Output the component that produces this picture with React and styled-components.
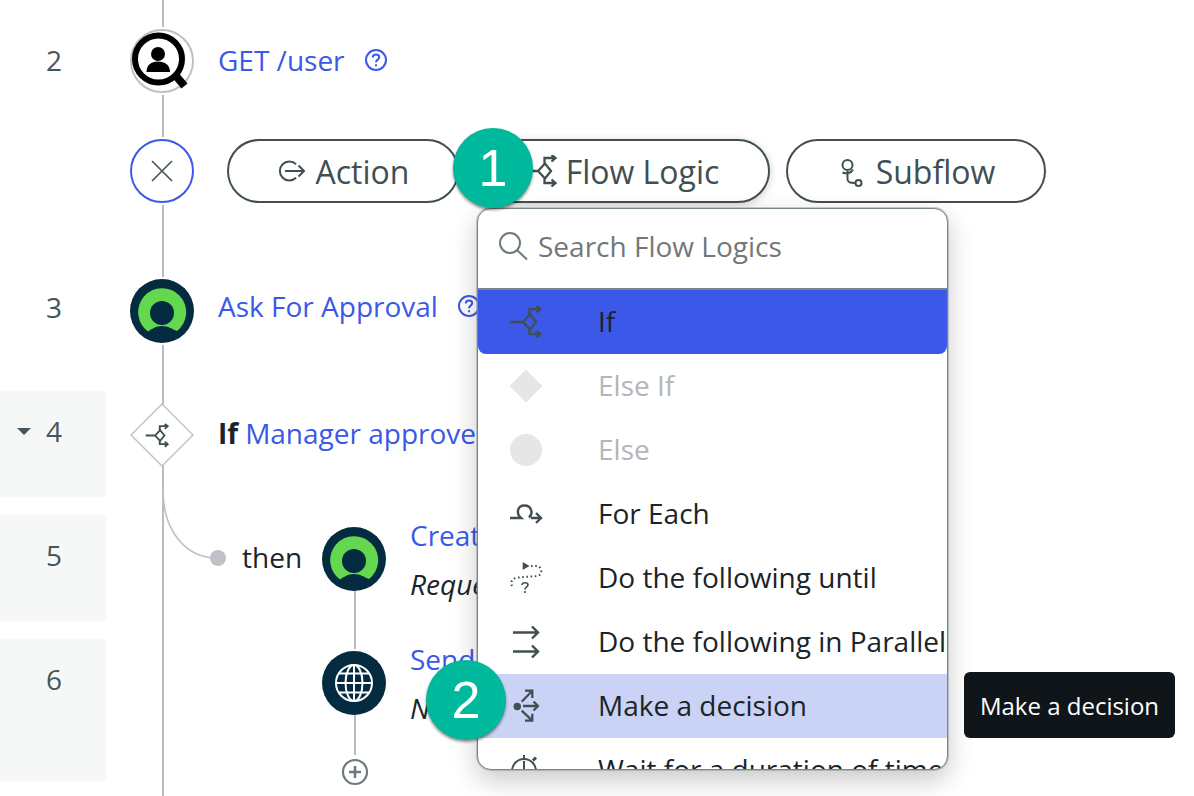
import React from "react";
import styled, { createGlobalStyle } from "styled-components";

const Global = createGlobalStyle`
  html, body { margin: 0; padding: 0; background: #fff; }
  body { font-family: "Open Sans", "Liberation Sans", sans-serif; }
`;

const Page = styled.div`
  width: 1194px;
  height: 796px;
  overflow: hidden;
  padding-top: 20px;
  box-sizing: border-box;
  background: linear-gradient(#b9bdc1, #b9bdc1) no-repeat 162px 0 / 2px 100%;
  color: #1b2426;
  font-size: 28px;
`;

const Row = styled.div`
  display: grid;
  grid-template-columns: 106px 1fr;
  height: ${(p) => p.$height}px;
`;

const NumCell = styled.div`
  height: ${(p) => p.$height || 106}px;
  background: ${(p) => (p.$shaded ? "#f6f8f8" : "transparent")};
  display: grid;
  grid-template-columns: 46px auto;
  grid-template-rows: 80px;
  align-items: center;
  justify-content: start;
  color: #47565a;
`;

const Caret = styled.span`
  justify-self: start;
  margin-left: 17px;
  width: 0;
  height: 0;
  border-left: 7px solid transparent;
  border-right: 7px solid transparent;
  border-top: 7px solid #47565a;
`;

const Num = styled.span`
  grid-column: 2;
`;

const Content = styled.div`
  position: relative;
  display: flex;
  align-items: ${(p) => (p.$top ? "flex-start" : "center")};
  align-self: start;
  padding: ${(p) => p.$pad || 0}px 0 0 24px;
  height: ${(p) => (p.$top ? "100%" : "64px")};
  box-sizing: content-box;
`;

const Node = styled.div`
  flex: none;
  width: 64px;
  height: 64px;
  box-sizing: border-box;
  border-radius: 50%;
  background: ${(p) => p.$bg || "#fff"};
  border: ${(p) => (p.$ring ? `2px solid ${p.$ring}` : "none")};
  display: flex;
  align-items: center;
  justify-content: center;
  box-shadow: 0 0 0 2px #fff;
`;

const DiamondNode = styled(Node)`
  border-radius: 0;
  background: none;
  box-shadow: none;
`;

const Title = styled.div`
  margin-left: 24px;
  display: flex;
  align-items: center;
  white-space: nowrap;
  color: #3c58e8;
  margin-top: ${(p) => p.$shift || 0}px;
`;

const Help = styled.svg`
  flex: none;
  margin-left: 19px;
  width: 24px;
  height: 24px;
`;

const Strong = styled.b`
  color: #1b2426;
  margin-right: 7px;
`;

const Pills = styled.div`
  display: flex;
  gap: 16px;
  margin-left: 33px;
`;

const PillWrap = styled.div`
  position: relative;
`;

const Pill = styled.div`
  width: ${(p) => p.$w}px;
  height: 64px;
  box-sizing: border-box;
  border: 2px solid #414f52;
  border-radius: 32px;
  background: #fff;
  display: flex;
  align-items: center;
  justify-content: center;
  gap: ${(p) => p.$gap || 10}px;
  font-size: 32px;
  color: #414f52;
  padding: 0 ${(p) => p.$pr || 0}px 0 ${(p) => p.$pl || 0}px;
  box-shadow: ${(p) => (p.$raised ? "0 2px 8px rgba(0,0,0,.2)" : "none")};
`;

const Badge = styled.div`
  position: absolute;
  left: ${(p) => p.$x}px;
  top: ${(p) => p.$y}px;
  z-index: 3;
  width: 80px;
  height: 80px;
  border-radius: 50%;
  background: #00b89c;
  color: #fff;
  font-family: "Liberation Sans", Arial, sans-serif;
  font-size: 52px;
  display: flex;
  align-items: center;
  justify-content: center;
  box-shadow: 0 2px 3px rgba(0, 0, 0, 0.45);
`;

const Menu = styled.div`
  position: absolute;
  left: 2px;
  top: 69px;
  z-index: 2;
  width: 471px;
  height: 562px;
  box-sizing: border-box;
  border: 1px solid #78868a;
  border-radius: 14px;
  background: #fff;
  box-shadow: 0 0 0 1px rgba(120, 134, 138, 0.4), 0 10px 26px rgba(0, 0, 0, 0.22);
`;

const MenuClip = styled.div`
  height: 100%;
  overflow: hidden;
  border-radius: 13px;
`;

const Search = styled.div`
  height: 79px;
  box-sizing: content-box;
  border-bottom: 2px solid #78868a;
  display: flex;
  align-items: center;
  padding-left: 20px;
  color: #72787a;
`;

const SearchInner = styled.div`
  display: flex;
  align-items: center;
  gap: 10px;
  margin-top: -6px;
`;

const Item = styled.div`
  height: 64px;
  display: flex;
  align-items: center;
  white-space: nowrap;
  overflow: hidden;
  background: ${(p) =>
    p.$state === "active" ? "#3b58e8" : p.$state === "hover" ? "#cad2f6" : "transparent"};
  border-radius: ${(p) => (p.$state === "active" ? "0 0 8px 8px" : "0")};
  color: ${(p) => (p.$state === "off" ? "#b3b6b8" : "#1b2426")};
`;

const ItemLabel = styled.span`
  margin-top: -2px;
`;

const ItemIcon = styled.div`
  flex: none;
  width: 120px;
  padding-left: 31px;
  box-sizing: border-box;
  display: flex;
  align-items: center;
`;

const Tooltip = styled.div`
  position: absolute;
  left: 486px;
  top: 463px;
  width: 211px;
  height: 66px;
  border-radius: 6px;
  background: #10151a;
  color: #fff;
  font-size: 24px;
  display: flex;
  align-items: center;
  justify-content: center;
`;

const Connector = styled.svg`
  position: absolute;
  left: 49px;
  top: -25px;
  width: 90px;
  height: 90px;
`;

const Then = styled.span`
  margin: -2px 0 0 112px;
  width: 80px;
  height: 64px;
  flex: none;
  display: flex;
  align-items: center;
`;

const StemCol = styled.div`
  flex: none;
  width: 64px;
  height: 100%;
  display: flex;
  flex-direction: column;
  align-items: center;
`;

const Stem = styled.div`
  width: 2px;
  flex: ${(p) => (p.$h ? `0 0 ${p.$h}px` : "1")};
  margin: ${(p) => p.$m || "0"};
  background: #b9bdc1;
  position: relative;
  left: 1px;
`;

const PlusSvg = styled.svg`
  flex: none;
  margin: 3px 0 0 2px;
`;

const StepText = styled.div`
  margin: ${(p) => p.$shift || 0}px 0 0 24px;
  display: flex;
  flex-direction: column;
  gap: 7px;
  white-space: nowrap;
`;

const StepLine = styled.div`
  line-height: 42px;
  color: ${(p) => (p.$link ? "#3c58e8" : "#1b2426")};
  font-style: ${(p) => (p.$link ? "normal" : "italic")};
`;

const S = { fill: "none", stroke: "#414f52", strokeWidth: 2.3 };

const IfIcon = ({ w = 33, h = 32 }) => (
  <svg width={w} height={h} viewBox="0 0 33 32" {...S}>
    <path d="M1 16H14M14 16L21 8.5L27 16L21 23.5Z" />
    <path d="M20.5 8.5V3H31M27.5 0L31.5 3L27.5 6.5M20.5 23.5V28H31M27.5 24.5L31.5 28L27.5 31.5" />
  </svg>
);

const ActionIcon = () => (
  <svg width="28" height="22" viewBox="0 0 28 22" {...S} strokeWidth="2">
    <path d="M19 4.2A9.5 9.5 0 1 0 19 17.8" />
    <path d="M8 11H27M21.5 5.5L27 11L21.5 16.5" />
  </svg>
);

const SubflowIcon = () => (
  <svg width="24" height="34" viewBox="0 0 24 34" {...S} strokeWidth="2">
    <circle cx="8.5" cy="11" r="5" />
    <path d="M3.5 18.5C7 20 12 19.5 14 15.5" />
    <path d="M8.5 17V25C8.5 28 10.5 29.2 16.5 29" />
    <circle cx="19.5" cy="29" r="3" />
  </svg>
);

const SearchIcon = () => (
  <svg width="30" height="30" viewBox="0 0 30 30" fill="none" stroke="#6c7a7e" strokeWidth="2">
    <circle cx="12" cy="12" r="10" />
    <path d="M19.5 19.5L29 28.5" />
  </svg>
);

const HelpIcon = () => (
  <Help viewBox="0 0 24 24" fill="none" stroke="#3c58e8" strokeWidth="2">
    <circle cx="12" cy="12" r="10" />
    <path d="M8.8 9.5C8.8 7.6 10.2 6.6 12 6.6C13.9 6.6 15.2 7.7 15.2 9.3C15.2 11.6 12 11.6 12 14.2" />
    <path d="M12 16.3V18.2" />
  </Help>
);

const CloseIcon = () => (
  <svg width="22" height="22" viewBox="0 0 22 22" fill="none" stroke="#47565a" strokeWidth="1.7">
    <path d="M1 1L21 21M21 1L1 21" />
  </svg>
);

const LookupIcon = () => (
  <svg width="60" height="60" viewBox="2 2 60 60" style={{ overflow: "visible" }}>
    <circle cx="28.5" cy="30" r="23.5" fill="#fff" stroke="#000" strokeWidth="6" />
    <path d="M46 47L54.5 57" stroke="#000" strokeWidth="8" />
    <circle cx="28" cy="25" r="7" fill="#000" />
    <path d="M16.5 43C16.5 36 21 32.5 28 32.5C35 32.5 40 36 40 43Z" fill="#000" />
  </svg>
);

const ApprovalIcon = () => (
  <svg width="64" height="64" viewBox="0 0 64 64">
    <path
      d="M18 52.5A24 24 0 1 1 47 52C42 50 38 47 32 47C26 47 22 50 18 52.5Z"
      fill="#63d84f"
    />
    <circle cx="32" cy="34" r="12" fill="#042b40" />
  </svg>
);

const GlobeIcon = () => (
  <svg width="40" height="40" viewBox="0 0 40 40" fill="none" stroke="#fff" strokeWidth="2">
    <circle cx="20" cy="20" r="18" />
    <ellipse cx="20" cy="20" rx="8.5" ry="18" />
    <path d="M20 2V38M2 20H38M5 10.5H35M5 29.5H35" />
  </svg>
);

const DiamondIcon = () => (
  <svg width="64" height="64" viewBox="0 0 64 64">
    <path d="M32 1L63 32L32 63L1 32Z" fill="#fff" stroke="#bcc6c8" strokeWidth="1.5" />
    <g transform="translate(15 21) scale(.72)">
      <g fill="none" stroke="#414f52" strokeWidth="2.6">
        <path d="M1 16H14M14 16L21 8.5L27 16L21 23.5Z" />
        <path d="M20.5 8.5V3H31M27.5 0L31.5 3L27.5 6.5M20.5 23.5V28H31M27.5 24.5L31.5 28L27.5 31.5" />
      </g>
    </g>
  </svg>
);

const PlusIcon = () => (
  <PlusSvg width="28" height="28" viewBox="0 0 28 28" fill="none" stroke="#6a7a7e" strokeWidth="2.2">
    <circle cx="14" cy="14" r="12" />
    <path d="M14 8V20M8 14H20" strokeWidth="2.6" />
  </PlusSvg>
);

const ElseIfIcon = () => (
  <svg width="34" height="34" viewBox="0 0 34 34">
    <path d="M17 1L33 17L17 33L1 17Z" fill="#e4e6e8" stroke="#e4e6e8" strokeLinejoin="round" />
  </svg>
);

const ElseIcon = () => (
  <svg width="34" height="34" viewBox="0 0 34 34">
    <circle cx="17" cy="17" r="16" fill="#e4e6e8" />
  </svg>
);

const ForEachIcon = () => (
  <svg width="34" height="20" viewBox="0 0 34 20" {...S} strokeWidth="2.4">
    <path d="M1 14H12C7 10 8 1.5 15.5 1.5C22 1.5 25 9 20 13.5" />
    <path d="M22 14H32M27 9L32 14L27 19" />
  </svg>
);

const UntilIcon = () => (
  <svg width="34" height="34" viewBox="0 0 34 34" fill="none" stroke="#414f52" strokeWidth="2">
    <path d="M22 5H28C33 5.5 34 13 29 15L9 16.5C2 17 0 24 5 26.5" strokeDasharray="1.6 2.6" />
    <path d="M13.7 1L20.5 5L13.7 9Z" fill="#414f52" stroke="none" />
    <path d="M13 24C13 21 19 21 19 24C19 26 16 26 16 28.5M16 30V32" strokeWidth="1.6" />
  </svg>
);

const ParallelIcon = () => (
  <svg width="32" height="32" viewBox="0 0 32 32" {...S} strokeWidth="2.4">
    <path d="M4 6.5H29M23 0.5L29 6.5L23 12.5M4 25.5H29M23 19.5L29 25.5L23 31.5" />
  </svg>
);

const DecisionIcon = () => (
  <svg width="32" height="34" viewBox="0 0 32 34" {...S}>
    <circle cx="8.3" cy="17.5" r="3.7" fill="#414f52" stroke="none" />
    <path d="M12.7 12.7L23.3 1.7M16 1.7H23.3V9M12.7 21.7L23.3 31.7M23.3 24.7V31.7H16M14 17H29M24.5 12.5L29 17L24.5 21.5" />
  </svg>
);

const TimerIcon = () => (
  <svg width="32" height="34" viewBox="0 0 32 34" {...S} strokeWidth="2">
    <circle cx="15" cy="18" r="12" />
    <path d="M15 2V5M15 8V18" />
    <path d="M24 7.5L27 4.5" strokeWidth="3" />
  </svg>
);

const items = [
  { label: "If", icon: <IfIcon />, state: "active" },
  { label: "Else If", icon: <ElseIfIcon />, state: "off" },
  { label: "Else", icon: <ElseIcon />, state: "off" },
  { label: "For Each", icon: <ForEachIcon /> },
  { label: "Do the following until", icon: <UntilIcon /> },
  { label: "Do the following in Parallel", icon: <ParallelIcon /> },
  { label: "Make a decision", icon: <DecisionIcon />, state: "hover" },
  { label: "Wait for a duration of time", icon: <TimerIcon /> },
];

export default function App() {
  return (
    <Page>
      <Global />
      <Row $height={119}>
        <NumCell>
          <Num>2</Num>
        </NumCell>
        <Content $pad={9}>
          <Node $ring="#b8c2c4">
            <LookupIcon />
          </Node>
          <Title $shift={-2}>
            GET /user
            <HelpIcon />
          </Title>
        </Content>
      </Row>

      <Row $height={128}>
        <NumCell />
        <Content>
          <Node $ring="#3c58e8">
            <CloseIcon />
          </Node>
          <Pills>
            <Pill $w={232} $gap={11}>
              <ActionIcon />
              Action
            </Pill>
            <PillWrap>
              <Pill $w={295} $gap={9} $raised $pr={2}>
                <IfIcon />
                Flow Logic
              </Pill>
              <Badge $x={-22} $y={-11}>1</Badge>
              <Menu>
                <MenuClip>
                  <Search>
                    <SearchInner>
                      <SearchIcon />
                      Search Flow Logics
                    </SearchInner>
                  </Search>
                  {items.map((item) => (
                    <Item key={item.label} $state={item.state}>
                      <ItemIcon>{item.icon}</ItemIcon>
                      <ItemLabel>{item.label}</ItemLabel>
                    </Item>
                  ))}
                </MenuClip>
                <Badge $x={-52} $y={451}>2</Badge>
                <Tooltip>Make a decision</Tooltip>
              </Menu>
            </PillWrap>
            <Pill $w={260} $gap={13} $pl={2}>
              <SubflowIcon />
              Subflow
            </Pill>
          </Pills>
        </Content>
      </Row>

      <Row $height={124}>
        <NumCell>
          <Num>3</Num>
        </NumCell>
        <Content $pad={12}>
          <Node $bg="#042b40">
            <ApprovalIcon />
          </Node>
          <Title $shift={-10}>
            Ask For Approval
            <HelpIcon />
          </Title>
        </Content>
      </Row>

      <Row $height={124}>
        <NumCell $shaded>
          <Caret />
          <Num>4</Num>
        </NumCell>
        <Content $pad={12}>
          <DiamondNode>
            <DiamondIcon />
          </DiamondNode>
          <Title $shift={-4}>
            <Strong>If</Strong>
            Manager approved
          </Title>
        </Content>
      </Row>

      <Row $height={124}>
        <NumCell $shaded>
          <Num>5</Num>
        </NumCell>
        <Content $top $pad={12}>
          <Connector viewBox="0 0 90 90" fill="none">
            <path d="M8 0C8 40 30 68 62 68" stroke="#bcc0c4" strokeWidth="1.6" />
            <circle cx="63" cy="68" r="8" fill="#bfc1c6" />
          </Connector>
          <Then>then</Then>
          <StemCol>
            <Node $bg="#042b40">
              <ApprovalIcon />
            </Node>
            <Stem />
          </StemCol>
          <StepText $shift={-13}>
            <StepLine $link>Create Task</StepLine>
            <StepLine>Requested</StepLine>
          </StepText>
        </Content>
      </Row>

      <Row $height={157}>
        <NumCell $shaded $height={142}>
          <Num>6</Num>
        </NumCell>
        <Content $top>
          <Then />
          <StemCol>
            <Stem $h={10} $m="0 0 2px" />
            <Node $bg="#042b40">
              <GlobeIcon />
            </Node>
            <Stem $h={40} />
            <PlusIcon />
          </StemCol>
          <StepText $shift={-1}>
            <StepLine $link>Send Email</StepLine>
            <StepLine>New</StepLine>
          </StepText>
        </Content>
      </Row>
    </Page>
  );
}
